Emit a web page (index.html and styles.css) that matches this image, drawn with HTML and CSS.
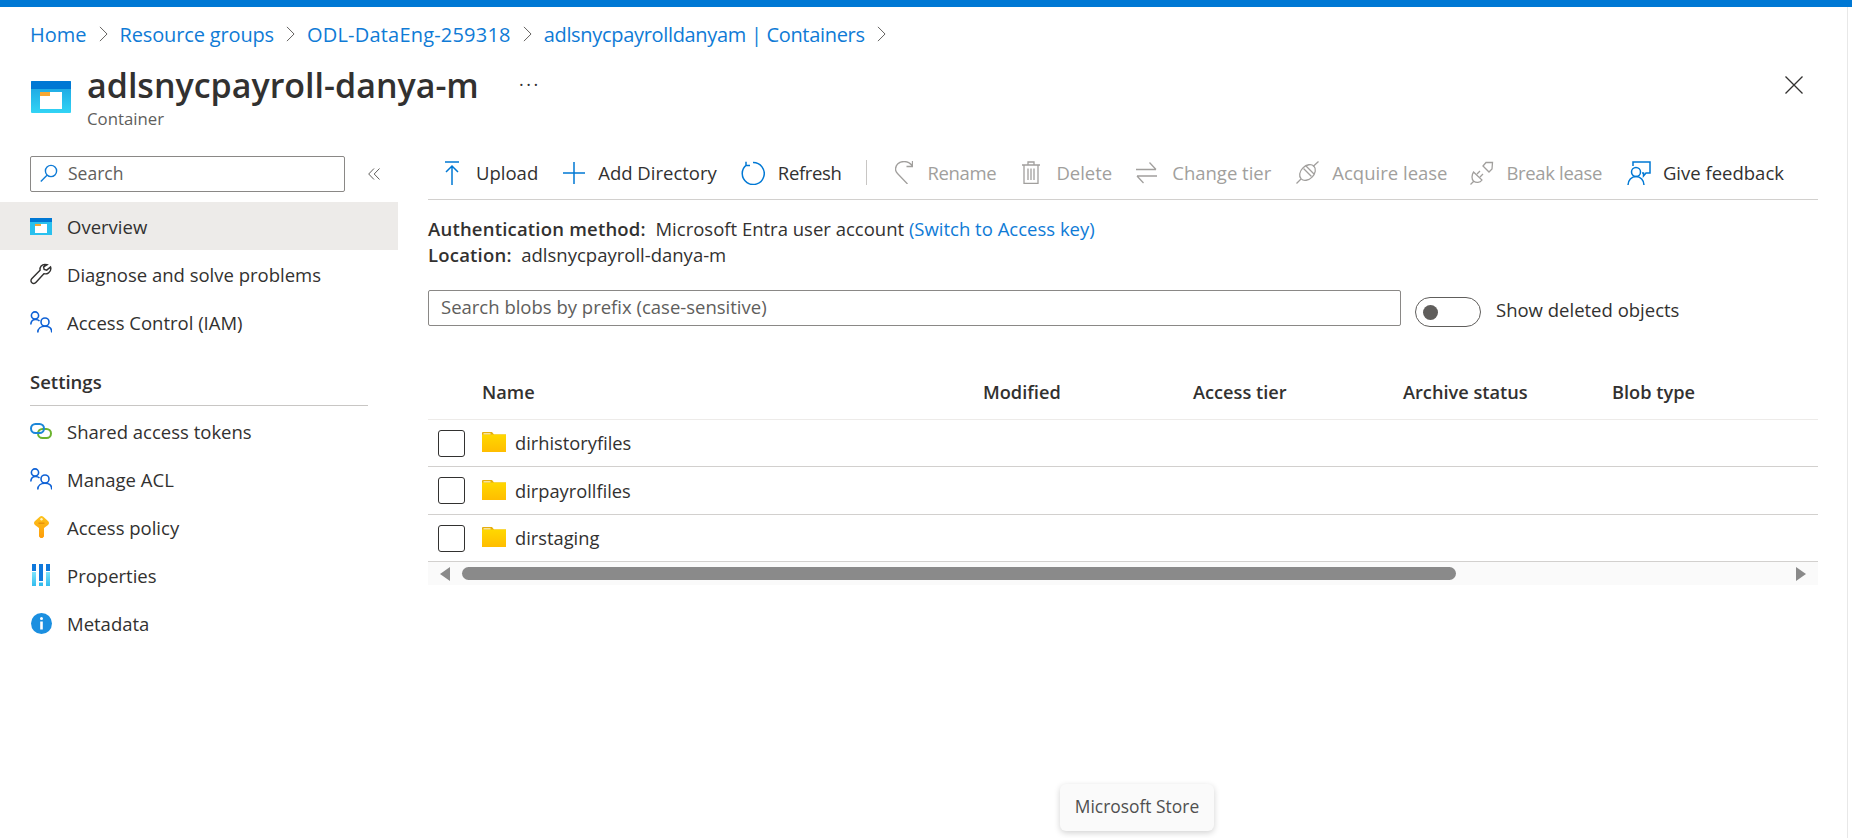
FILE: index.html
```html
<!DOCTYPE html>
<html lang="en">
<head>
    <meta charset="UTF-8">
    <title>adlsnycpayroll-danya-m - Container</title>
    <link rel="stylesheet" href="styles.css">
</head>
<body>
    <div class="page">
        <!-- breadcrumb -->
        <nav class="crumbs">
            <a>Home</a>
            <svg class="crumb-sep" viewBox="0 0 10 18"><path d="M1 1l8 8-8 8"/></svg>
            <a class="crumb-narrow">Resource groups</a>
            <svg class="crumb-sep" viewBox="0 0 10 18"><path d="M1 1l8 8-8 8"/></svg>
            <a class="crumb-wide">ODL-DataEng-259318</a>
            <svg class="crumb-sep" viewBox="0 0 10 18"><path d="M1 1l8 8-8 8"/></svg>
            <a class="crumb-last">adlsnycpayrolldanyam | Containers</a>
            <svg class="crumb-sep" viewBox="0 0 10 18"><path d="M1 1l8 8-8 8"/></svg>
        </nav>

        <!-- title -->
        <header class="head">
            <svg class="head-icon" viewBox="0 0 40 32">
                <defs>
                    <linearGradient id="boxFill" x1="0" y1="0" x2="0" y2="1">
                        <stop offset="0" stop-color="#1a9fe0"/>
                        <stop offset="1" stop-color="#32d4f5"/>
                    </linearGradient>
                </defs>
                <rect width="40" height="32" rx="1" fill="url(#boxFill)"/>
                <path d="M1 0h38a1 1 0 0 1 1 1v7H0V1a1 1 0 0 1 1-1z" fill="#0078d4"/>
                <rect x="9" y="11" width="22" height="17" fill="#fff"/>
                <rect x="9" y="11" width="10" height="4" fill="#f7a733"/>
            </svg>
            <div class="head-text">
                <h1>adlsnycpayroll-danya-m</h1>
                <p>Container</p>
            </div>
            <div class="head-more">&middot;&middot;&middot;</div>
            <svg class="head-close" viewBox="0 0 18 18"><path d="M0.5 0.5l17 17M17.5 0.5l-17 17"/></svg>
        </header>

        <div class="body">
            <!-- left menu -->
            <aside class="side">
                <div class="side-top">
                    <div class="side-search">
                        <svg viewBox="0 0 18 18"><circle cx="11" cy="7" r="5.6"/><path d="M7 11.2L0.8 17.4"/></svg>
                        <span>Search</span>
                    </div>
                    <svg class="side-collapse" viewBox="0 0 12 12"><path d="M6 0.5L0.7 6 6 11.5M11.5 0.5L6.2 6l5.3 5.5"/></svg>
                </div>
                <ul class="menu">
                    <li class="menu-item active">
                        <span class="menu-icon">
                            <svg width="22" height="17" viewBox="0 0 22 17">
                                <rect width="22" height="17" fill="#29c0ee"/>
                                <rect width="22" height="4" fill="#0078d4"/>
                                <rect x="5" y="6" width="12" height="9" fill="#fff"/>
                                <rect x="5" y="6" width="6" height="2" fill="#f7a733"/>
                            </svg>
                        </span>
                        Overview
                    </li>
                    <li class="menu-item">
                        <span class="menu-icon">
                            <svg width="23" height="22" viewBox="0 0 23 22" fill="none" stroke="#323130" stroke-width="1.5"><path d="M15.500 1c-3 0-5.500 2.500-5 6L1.800 16c-1.200 1.300-1 3.200.2 4.200 1.200 1.100 3 1 4.100-.2l8.400-9.300c3.500.8 7.200-1.500 7.300-5.200 0-.7-.1-1.300-.3-1.800l-4 3.300-2.700-.8-.6-2.700 3.600-2.200C17 1.100 16.300 1 15.500 1z"/></svg>
                        </span>
                        Diagnose and solve problems
                    </li>
                    <li class="menu-item">
                        <span class="menu-icon">
                            <svg width="22" height="22" viewBox="0 0 22 22" fill="none" stroke="#0f62d6" stroke-width="1.600"><circle cx="5" cy="4.500" r="3.600"/><circle cx="15" cy="11" r="4"/><path d="M.8 13.500C1 10 3 8.500 5.500 8.500c1.500 0 3 .5 4 1.500M7.800 21.500c0-4 3.200-6.200 7.200-6.200s6.800 2.200 6.800 6.200"/></svg>
                        </span>
                        Access Control (IAM)
                    </li>
                </ul>
                <div class="side-section">Settings</div>
                <ul class="menu">
                    <li class="menu-item">
                        <span class="menu-icon">
                            <svg width="22" height="16" viewBox="0 0 22 16" fill="none" stroke-width="2"><rect x="8" y="6" width="13" height="9" rx="4.500" stroke="#6bb32e"/><rect x="1" y="1" width="13" height="9" rx="4.500" stroke="#1a86d8"/></svg>
                        </span>
                        Shared access tokens
                    </li>
                    <li class="menu-item">
                        <span class="menu-icon">
                            <svg width="22" height="22" viewBox="0 0 22 22" fill="none" stroke="#0f62d6" stroke-width="1.600"><circle cx="5" cy="4.500" r="3.600"/><circle cx="15" cy="11" r="4"/><path d="M.8 13.500C1 10 3 8.500 5.500 8.500c1.500 0 3 .5 4 1.500M7.800 21.500c0-4 3.200-6.200 7.200-6.200s6.800 2.200 6.800 6.200"/></svg>
                        </span>
                        Manage ACL
                    </li>
                    <li class="menu-item">
                        <span class="menu-icon">
                            <svg width="15" height="22" viewBox="0 0 15 22">
                                <defs>
                                    <linearGradient id="keyFill" x1="0" y1="0" x2="0" y2="1">
                                        <stop offset="0" stop-color="#fcc21b"/>
                                        <stop offset="1" stop-color="#fe9d0b"/>
                                    </linearGradient>
                                </defs>
                                <path d="M7.500 0c.6 0 1.100.2 1.500.6L14 5c.7.600 1 1.200 1 2s-.3 1.400-1 2l-4 3v8.500L8.500 22h-2L5 20.500V12L1 9C.3 8.400 0 7.800 0 7s.3-1.400 1-2L6 .6C6.400.2 6.900 0 7.500 0z" fill="url(#keyFill)"/>
                                <circle cx="7.500" cy="3.200" r="1.200" fill="#fff3c4"/>
                                <rect x="4.500" y="6.500" width="6" height="1.500" fill="#e8930c"/>
                            </svg>
                        </span>
                        Access policy
                    </li>
                    <li class="menu-item">
                        <span class="menu-icon">
                            <svg width="18" height="22" viewBox="0 0 18 22">
                                <defs>
                                    <linearGradient id="barFill" x1="0" y1="0" x2="0" y2="1">
                                        <stop offset="0" stop-color="#7fe4fb"/>
                                        <stop offset="1" stop-color="#32bcee"/>
                                    </linearGradient>
                                </defs>
                                <rect width="4" height="7" fill="#0f78dc"/><rect y="8" width="4" height="14" fill="url(#barFill)"/>
                                <rect x="7" width="4" height="17" fill="#0f78dc"/><rect x="7" y="18.500" width="4" height="3.500" fill="#32bcee"/>
                                <rect x="14" width="4" height="7" fill="#0f78dc"/><rect x="14" y="8" width="4" height="14" fill="url(#barFill)"/>
                            </svg>
                        </span>
                        Properties
                    </li>
                    <li class="menu-item">
                        <span class="menu-icon">
                            <svg width="21" height="21" viewBox="0 0 21 21"><circle cx="10.500" cy="10.500" r="10.500" fill="#1b8fe0"/><circle cx="10.500" cy="5.500" r="1.500" fill="#fff"/><rect x="9.200" y="8.500" width="2.600" height="8" fill="#fff"/></svg>
                        </span>
                        Metadata
                    </li>
                </ul>
            </aside>

            <!-- main content -->
            <main class="main">
                <div class="toolbar">
                    <div class="tool"><svg class="gap-17" width="14" height="24" viewBox="0 0 14 24"><path d="M0 1h14M7 24V5M1 11l6-6 6 6"/></svg><span>Upload</span></div>
                    <div class="tool near"><svg class="gap-13" width="22" height="22" viewBox="0 0 22 22"><path d="M0 11h22M11 0v22"/></svg><span>Add Directory</span></div>
                    <div class="tool near"><svg class="gap-13" width="24" height="24" viewBox="0 0 24 24"><path d="M5.500 3.800A11 11 0 1 0 12 1.500M5 0.800v3.700h4"/></svg><span class="tight">Refresh</span></div>
                    <div class="tool-sep"></div>
                    <div class="tool off far"><svg class="gap-15" width="18" height="23" viewBox="0 0 18 23"><path d="M17.500 5C15 1.500 12 .5 9 .5 4 .5.500 4 .500 8c0 2 1 3.500 2 4.500L12.500 23M17.500 0v5.500h-6"/></svg><span class="tight">Rename</span></div>
                    <div class="tool off near"><svg class="gap-16" width="18" height="23" viewBox="0 0 18 23"><path d="M0 4h18M2 4v18.300h14V4M6 4V1h6v3M6 7.500v11.500M9 7.500v11.500M12 7.500v11.500"/></svg><span>Delete</span></div>
                    <div class="tool off"><svg class="gap-15" width="21" height="23" viewBox="0 0 21 23"><path d="M0 8.500h20M13.500 1.500l6.500 7M1 15h20M7.500 22L1 15"/></svg><span>Change tier</span></div>
                    <div class="tool off nearest"><svg class="gap-13" width="23" height="23" viewBox="0 0 23 23"><path d="M.5 22.500L5 18M17 5.500L22.500.5M7.500 7.500l8 8M10 5l8 8"/><ellipse cx="11.500" cy="11.500" rx="9" ry="6.500" transform="rotate(-45 11.500 11.500)"/></svg><span>Acquire lease</span></div>
                    <div class="tool off"><svg class="gap-13" width="24" height="24" viewBox="0 0 24 24"><path d="M13 5l6 6 3-3 .5-6.500H16zM3.500 11l8.500 8c-2 3-6 3-8.500 1-2-2-2-6 0-9zM7 13l3-3M10 16l3-3M.5 23.500l3-3"/></svg><span class="tight">Break lease</span></div>
                    <div class="tool"><svg class="gap-12" width="24" height="24" viewBox="0 0 24 24"><path d="M6 5V1h17v11h-4l-2.500 3v-3H15"/><circle cx="9" cy="11" r="4.500"/><path d="M1 24c0-4.500 3.500-8.500 8-8.500s8 4 8 8.500"/></svg><span>Give feedback</span></div>
                </div>

                <div class="info">
                    <div><b>Authentication method:</b>&nbsp; Microsoft Entra user account <a>(Switch to Access key)</a></div>
                    <div><b>Location:</b>&nbsp; adlsnycpayroll-danya-m</div>
                </div>

                <div class="filter">
                    <div class="filter-input">Search blobs by prefix (case-sensitive)</div>
                    <div class="toggle"><span></span></div>
                    <div class="toggle-label">Show deleted objects</div>
                </div>

                <div class="table">
                    <div class="tr th">
                        <div></div><div>Name</div><div>Modified</div><div>Access tier</div><div>Archive status</div><div>Blob type</div>
                    </div>
                    <div class="tr">
                        <div><span class="check"></span></div>
                        <div class="name">
                            <svg class="folder" viewBox="0 0 24 20"><use href="#folderShape"/></svg>dirhistoryfiles
                        </div>
                    </div>
                    <div class="tr tall">
                        <div><span class="check"></span></div>
                        <div class="name">
                            <svg class="folder" viewBox="0 0 24 20"><use href="#folderShape"/></svg>dirpayrollfiles
                        </div>
                    </div>
                    <div class="tr">
                        <div><span class="check"></span></div>
                        <div class="name">
                            <svg class="folder" viewBox="0 0 24 20"><use href="#folderShape"/></svg>dirstaging
                        </div>
                    </div>
                    <div class="hscroll">
                        <span class="arrow-l"></span>
                        <span class="thumb"></span>
                        <span class="arrow-r"></span>
                    </div>
                </div>
            </main>
        </div>

        <div class="store-tip">Microsoft Store</div>
    </div>

    <svg class="defs" width="0" height="0">
        <defs>
            <linearGradient id="folderFill" x1="0" y1="0" x2="0" y2="1">
                <stop offset="0" stop-color="#ffd800"/>
                <stop offset="1" stop-color="#ffbd00"/>
            </linearGradient>
            <g id="folderShape">
                <path d="M0 1a1 1 0 0 1 1-1h9l2 2.500H24V20H0z" fill="#e6ae0e"/>
                <rect y="2.500" width="24" height="17.500" fill="url(#folderFill)"/>
                <rect x="1.500" y="1" width="7" height="1.500" fill="#f7e39a"/>
            </g>
        </defs>
    </svg>
</body>
</html>
```

FILE: styles.css
```css
*{
    margin: 0;
    padding: 0;
    box-sizing: border-box;
}

body{
    font-family: "Open Sans", "Noto Sans", sans-serif;
    font-size: 18.5px;
    color: #323130;
    background-color: #fff;
    overflow: hidden;
}

ul{
    list-style: none;
}

a{
    color: #0f7bd6;
}

.defs{
    position: absolute;
}

.page{
    position: relative;
    height: 838px;
    border-top: 7px solid #0078d4;
    padding-right: 4px;
}

/* line at the right edge of the window */
.page::after{
    content: "";
    position: absolute;
    top: 0;
    bottom: 0;
    right: 4px;
    width: 1px;
    background-color: #e8e8e8;
}

/* breadcrumb */
.crumbs{
    display: flex;
    align-items: center;
    height: 54px;
    padding-left: 30px;
    font-size: 20px;
}

.crumb-narrow{
    letter-spacing: -0.150px;
}

.crumb-wide{
    letter-spacing: 0.200px;
}

.crumb-last{
    letter-spacing: -0.320px;
}

.crumb-sep{
    width: 9px;
    height: 16px;
    margin: 0 12px;
    fill: none;
    stroke: #605e5c;
    stroke-width: 1.100;
}

/* title */
.head{
    display: flex;
    height: 95px;
    padding-left: 31px;
}

.head-icon{
    width: 40px;
    height: 32px;
    margin-top: 20px;
}

.head-text{
    margin-left: 16px;
    width: 432px;
    white-space: nowrap;
}

.head-text h1{
    font-size: 34px;
    font-weight: 600;
    line-height: 48px;
}

.head-text p{
    font-size: 16.800px;
    line-height: 20px;
    color: #605e5c;
}

.head-more{
    font-size: 18px;
    line-height: 46px;
    letter-spacing: 2.500px;
}

.head-close{
    width: 18px;
    height: 18px;
    margin-top: 15px;
    margin-left: auto;
    margin-right: 45px;
    fill: none;
    stroke: #323130;
    stroke-width: 1.300;
}

.body{
    display: flex;
}

/* left menu */
.side{
    width: 398px;
    flex-shrink: 0;
}

.side-top{
    display: flex;
    align-items: center;
    padding-left: 30px;
    margin-bottom: 10px;
}

.side-search{
    display: flex;
    align-items: center;
    width: 315px;
    height: 36px;
    border: 1px solid #8a8886;
    border-radius: 2px;
    padding-left: 9px;
    padding-bottom: 2px;
    font-size: 17.500px;
    color: #605e5c;
}

.side-search svg{
    width: 18px;
    height: 18px;
    margin-right: 10px;
    fill: none;
    stroke: #0f7bd6;
    stroke-width: 1.400;
}

.side-collapse{
    width: 12px;
    height: 12px;
    margin-left: 23px;
    fill: none;
    stroke: #605e5c;
    stroke-width: 1;
}

.menu-item{
    display: flex;
    align-items: center;
    height: 48px;
    padding-left: 30px;
}

.menu-item.active{
    background-color: #edebe9;
}

.menu-icon{
    display: flex;
    justify-content: center;
    align-items: center;
    width: 22px;
    margin-right: 15px;
}

.side-section{
    margin: 0 30px 1px;
    padding: 24px 0 11px;
    line-height: 24px;
    font-weight: 600;
    border-bottom: 1px solid #c8c6c4;
}

/* main content */
.main{
    width: 1390px;
    margin-left: 30px;
}

.toolbar{
    display: flex;
    align-items: center;
    height: 44px;
    padding: 0 0 10px 17px;
    border-bottom: 1px solid #d2d0ce;
    white-space: nowrap;
}

.tool{
    display: flex;
    align-items: center;
    flex-shrink: 0;
    margin-right: 25px;
}

.tool.near{
    margin-right: 24px;
}

.tool.nearest{
    margin-right: 22px;
}

.tool.far{
    margin-right: 26px;
}

.tool svg{
    fill: none;
    stroke: #0078d4;
    stroke-width: 1.500;
}

.tight{
    letter-spacing: -0.350px;
}

.gap-12{ margin-right: 12px; }
.gap-13{ margin-right: 13px; }
.gap-15{ margin-right: 15px; }
.gap-16{ margin-right: 16px; }
.gap-17{ margin-right: 17px; }

.tool.off{
    color: #a19f9d;
}

.tool.off svg{
    stroke: #a19f9d;
    stroke-width: 1.300;
}

.tool-sep{
    flex-shrink: 0;
    width: 1px;
    height: 25px;
    background-color: #c8c6c4;
    margin-right: 28px;
}

.info{
    margin-top: 16px;
    line-height: 26px;
}

.info b{
    font-weight: 600;
    letter-spacing: 0.200px;
}

.filter{
    display: flex;
    align-items: flex-start;
    margin-top: 22px;
}

.filter-input{
    width: 973px;
    height: 36px;
    line-height: 31px;
    padding-left: 12px;
    border: 1px solid #8a8886;
    border-radius: 2px;
    color: #605e5c;
}

.toggle{
    display: flex;
    align-items: center;
    width: 66px;
    height: 30px;
    margin: 7px 15px 0 14px;
    padding-left: 7px;
    border: 1px solid #605e5c;
    border-radius: 15px;
}

.toggle span{
    width: 15px;
    height: 15px;
    border-radius: 50%;
    background-color: #605e5c;
}

.toggle-label{
    margin-top: 7px;
    line-height: 26px;
}

/* table */
.table{
    margin-top: 39px;
}

.tr{
    display: grid;
    grid-template-columns: 54px 501px 210px 210px 209px 1fr;
    align-items: center;
    height: 47px;
    border-bottom: 1px solid #d2d0ce;
    font-size: 18.300px;
}

.tr.th{
    height: 54px;
    font-size: 18.200px;
    font-weight: 600;
    padding-bottom: 2px;
    border-bottom-color: #edebe9;
}

.tr.tall{
    height: 48px;
}

.check{
    display: block;
    width: 27px;
    height: 27px;
    margin-left: 10px;
    border: 1px solid #323130;
    border-radius: 3px;
}

.name{
    display: flex;
    align-items: center;
    grid-column: 2 / span 2;
    padding-bottom: 1px;
}

.folder{
    width: 24px;
    height: 20px;
    margin-right: 9px;
    margin-top: -1px;
}

.hscroll{
    display: flex;
    align-items: center;
    height: 23px;
    padding: 0 12px;
    background-color: #fafafa;
}

.arrow-l{
    width: 0;
    height: 0;
    border-top: 7px solid transparent;
    border-bottom: 7px solid transparent;
    border-right: 10px solid #8a8a8a;
    margin-right: 12px;
}

.arrow-r{
    width: 0;
    height: 0;
    border-top: 7px solid transparent;
    border-bottom: 7px solid transparent;
    border-left: 10px solid #8a8a8a;
    margin-left: auto;
}

.thumb{
    width: 994px;
    height: 13px;
    border-radius: 7px;
    background-color: #8a8a8a;
}

/* tooltip from the taskbar */
.store-tip{
    position: absolute;
    left: 1060px;
    top: 777px;
    width: 154px;
    height: 47px;
    line-height: 45px;
    text-align: center;
    font-size: 17.400px;
    color: #505050;
    background-color: #fafafa;
    border-radius: 6px;
    box-shadow: 0 2px 6px rgba(0,0,0,0.18);
}
```
